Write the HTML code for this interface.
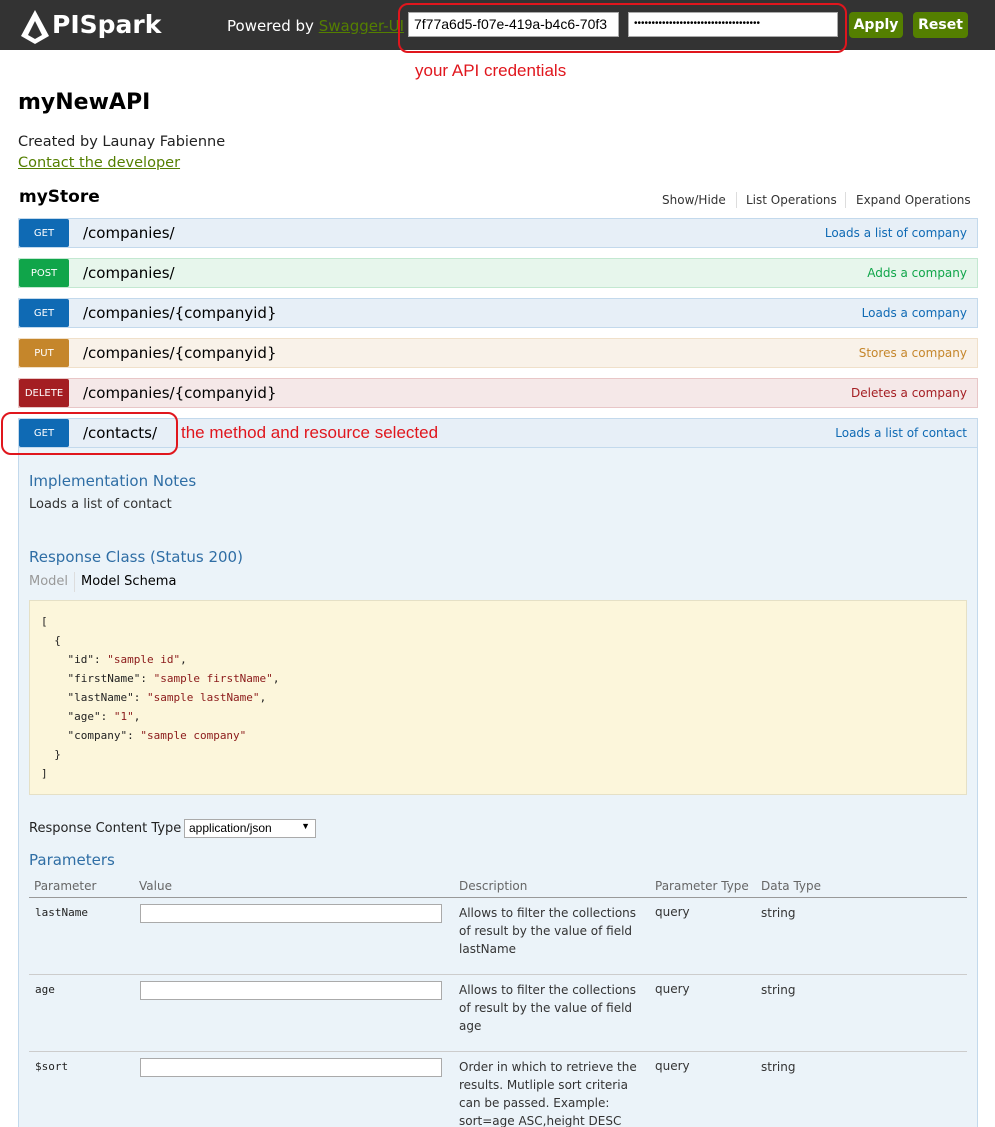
<!DOCTYPE html>
<html><head><meta charset="utf-8"><style>
*{margin:0;padding:0;box-sizing:border-box}
html,body{width:995px;height:1127px;overflow:hidden}
body{background:#fff;font-family:"DejaVu Sans","Liberation Sans",sans-serif;color:#222;position:relative}
.a{position:absolute;white-space:nowrap}
.hdr{position:absolute;left:0;top:0;width:995px;height:50px;background:#333}
.inp{position:absolute;background:#fff;border:1px solid #aaa;font-family:"Liberation Sans",sans-serif;font-size:14px;padding:3px 5px;color:#000;overflow:hidden}
.btn{position:absolute;background:#547f00;color:#fff;font-weight:bold;font-size:14px;border-radius:4px;text-align:center;line-height:26px;top:12px;height:26px}
.row{position:absolute;left:18px;width:960px;height:30px;border:1px solid}
.badge{position:absolute;left:0;top:0;width:50px;height:28px;color:#fff;font-size:10px;text-align:center;line-height:30px;border-radius:2px}
.path{position:absolute;left:64px;top:5px;font-size:15px;color:#000}
.rt{position:absolute;right:10px;top:7px;font-size:12px}
.get{background:#e7eff7;border-color:#c3d9ec}.get .badge{background:#0f6ab4}.get .rt{color:#0f6ab4}
.post{background:#e7f6ec;border-color:#c3e8d1}.post .badge{background:#10a54a}.post .rt{color:#10a54a}
.put{background:#f9f2e9;border-color:#f0e0ca}.put .badge{background:#c5862b}.put .rt{color:#c5862b}
.del{background:#f5e8e8;border-color:#e8c6c7}.del .badge{background:#a41e22}.del .rt{color:#a41e22}
.red{color:#e0161d}
.h4{color:#2f6ea5;font-size:15px}
.code{font-family:"DejaVu Sans Mono","Liberation Mono",monospace;font-size:11px;color:#222}
.code .s{color:#8b1a1a}
.mono{font-family:"DejaVu Sans Mono",monospace;font-size:11px}
.sm{font-size:12px;color:#333}
.th{font-size:12px;color:#666}
.pin{position:absolute;left:140px;width:302px;height:19px;background:#fff;border:1px solid #aaa}
.sep{position:absolute;left:29px;width:938px;height:1px;background:#ccc}
</style></head><body>
<div class="hdr"></div>
<svg class="a" style="left:20px;top:9px" width="30" height="36" viewBox="0 0 30 36"><path d="M15 1 L29 27 L15 35 L1 27 Z M15 12 L8 26 L15 30 L22 26 Z" fill="#fff" fill-rule="evenodd"/></svg>
<div class="a" style="left:52px;top:10px;color:#fff;font-weight:bold;font-size:25px;font-family:'DejaVu Sans',sans-serif">PISpark</div>
<div class="a" style="left:227px;top:17px;color:#fff;font-size:15px">Powered by <span style="color:#547f00;text-decoration:underline">Swagger-UI</span></div>
<div class="inp" style="left:408px;top:12px;width:211px;height:25px">7f77a6d5-f07e-419a-b4c6-70f3</div>
<div class="inp" style="left:628px;top:12px;width:210px;height:25px;font-size:10px;padding-top:5px">••••••••••••••••••••••••••••••••••••</div>
<div class="btn" style="left:849px;width:54px">Apply</div>
<div class="btn" style="left:913px;width:55px">Reset</div>
<div class="a" style="left:398px;top:3px;width:449px;height:50px;border:2px solid #e0161d;border-radius:10px"></div>
<div class="a red" style="left:415px;top:61px;font-size:17px;font-family:'Liberation Sans',sans-serif">your API credentials</div>

<div class="a" style="left:18px;top:90px;font-size:22px;font-weight:bold;color:#000">myNewAPI</div>
<div class="a" style="left:18px;top:134px;font-size:14.5px">Created by Launay Fabienne</div>
<div class="a" style="left:18px;top:155px;font-size:14.5px;color:#547f00;text-decoration:underline">Contact the developer</div>
<div class="a" style="left:19px;top:187px;font-size:17px;font-weight:bold;color:#000">myStore</div>
<div class="a sm" style="left:662px;top:193px">Show/Hide</div>
<div class="a" style="left:736px;top:192px;width:1px;height:16px;background:#ddd"></div>
<div class="a sm" style="left:746px;top:193px">List Operations</div>
<div class="a" style="left:845px;top:192px;width:1px;height:16px;background:#ddd"></div>
<div class="a sm" style="left:856px;top:193px">Expand Operations</div>

<div class="row get" style="top:218px"><div class="badge">GET</div><div class="path">/companies/</div><div class="rt">Loads a list of company</div></div>
<div class="row post" style="top:258px"><div class="badge">POST</div><div class="path">/companies/</div><div class="rt">Adds a company</div></div>
<div class="row get" style="top:298px"><div class="badge">GET</div><div class="path">/companies/{companyid}</div><div class="rt">Loads a company</div></div>
<div class="row put" style="top:338px"><div class="badge">PUT</div><div class="path">/companies/{companyid}</div><div class="rt">Stores a company</div></div>
<div class="row del" style="top:378px"><div class="badge">DELETE</div><div class="path">/companies/{companyid}</div><div class="rt">Deletes a company</div></div>
<div class="a" style="left:18px;top:448px;width:960px;height:700px;background:#ebf3f9;border:1px solid #c3d9ec;border-top:none"></div>
<div class="row get" style="top:418px"><div class="badge">GET</div><div class="path">/contacts/</div><div class="rt">Loads a list of contact</div></div>
<div class="a" style="left:1px;top:412px;width:177px;height:43px;border:2px solid #e0161d;border-radius:10px"></div>
<div class="a red" style="left:181px;top:423px;font-size:17px;font-family:'Liberation Sans',sans-serif">the method and resource selected</div>

<div class="a h4" style="left:29px;top:472px">Implementation Notes</div>
<div class="a sm" style="left:29px;top:497px;font-size:13px">Loads a list of contact</div>
<div class="a h4" style="left:29px;top:548px">Response Class (Status 200)</div>
<div class="a" style="left:29px;top:574px;font-size:13px;color:#999">Model</div>
<div class="a" style="left:74px;top:572px;width:1px;height:20px;background:#ddd"></div>
<div class="a" style="left:81px;top:574px;font-size:13px;color:#000">Model Schema</div>
<div class="a" style="left:29px;top:600px;width:938px;height:195px;background:#fcf6db;border:1px solid #e5e0c6"></div>
<div class="a code" style="left:41px;top:612px;line-height:19px;white-space:pre">[
  {
    "id": <span class="s">"sample id"</span>,
    "firstName": <span class="s">"sample firstName"</span>,
    "lastName": <span class="s">"sample lastName"</span>,
    "age": <span class="s">"1"</span>,
    "company": <span class="s">"sample company"</span>
  }
]</div>
<div class="a" style="left:29px;top:821px;font-size:13px;color:#222">Response Content Type</div>
<div class="a" style="left:184px;top:819px;width:132px;height:19px;background:#fff;border:1px solid #aaa;font-size:12px;padding:1px 4px;font-family:'Liberation Sans',sans-serif;color:#000">application/json<span style="position:absolute;right:5px;top:1px;font-size:9px">▼</span></div>
<div class="a h4" style="left:29px;top:851px">Parameters</div>
<div class="a th" style="left:34px;top:879px">Parameter</div>
<div class="a th" style="left:139px;top:879px">Value</div>
<div class="a th" style="left:459px;top:879px">Description</div>
<div class="a th" style="left:655px;top:879px">Parameter Type</div>
<div class="a th" style="left:761px;top:879px">Data Type</div>
<div class="a" style="left:29px;top:897px;width:938px;height:1px;background:#999"></div>

<div class="a mono" style="left:35px;top:906px">lastName</div>
<div class="pin" style="top:904px"></div>
<div class="a sm" style="left:459px;top:904px;line-height:18px;white-space:normal;width:190px">Allows to filter the collections of result by the value of field lastName</div>
<div class="a sm" style="left:655px;top:905px">query</div>
<div class="a sm" style="left:761px;top:906px">string</div>
<div class="sep" style="top:974px"></div>
<div class="a mono" style="left:35px;top:983px">age</div>
<div class="pin" style="top:981px"></div>
<div class="a sm" style="left:459px;top:981px;line-height:18px;white-space:normal;width:190px">Allows to filter the collections of result by the value of field age</div>
<div class="a sm" style="left:655px;top:982px">query</div>
<div class="a sm" style="left:761px;top:983px">string</div>
<div class="sep" style="top:1051px"></div>
<div class="a mono" style="left:35px;top:1060px">$sort</div>
<div class="pin" style="top:1058px"></div>
<div class="a sm" style="left:459px;top:1058px;line-height:18px;white-space:normal;width:190px">Order in which to retrieve the results. Mutliple sort criteria can be passed. Example: sort=age ASC,height DESC</div>
<div class="a sm" style="left:655px;top:1059px">query</div>
<div class="a sm" style="left:761px;top:1060px">string</div>
</body></html>
